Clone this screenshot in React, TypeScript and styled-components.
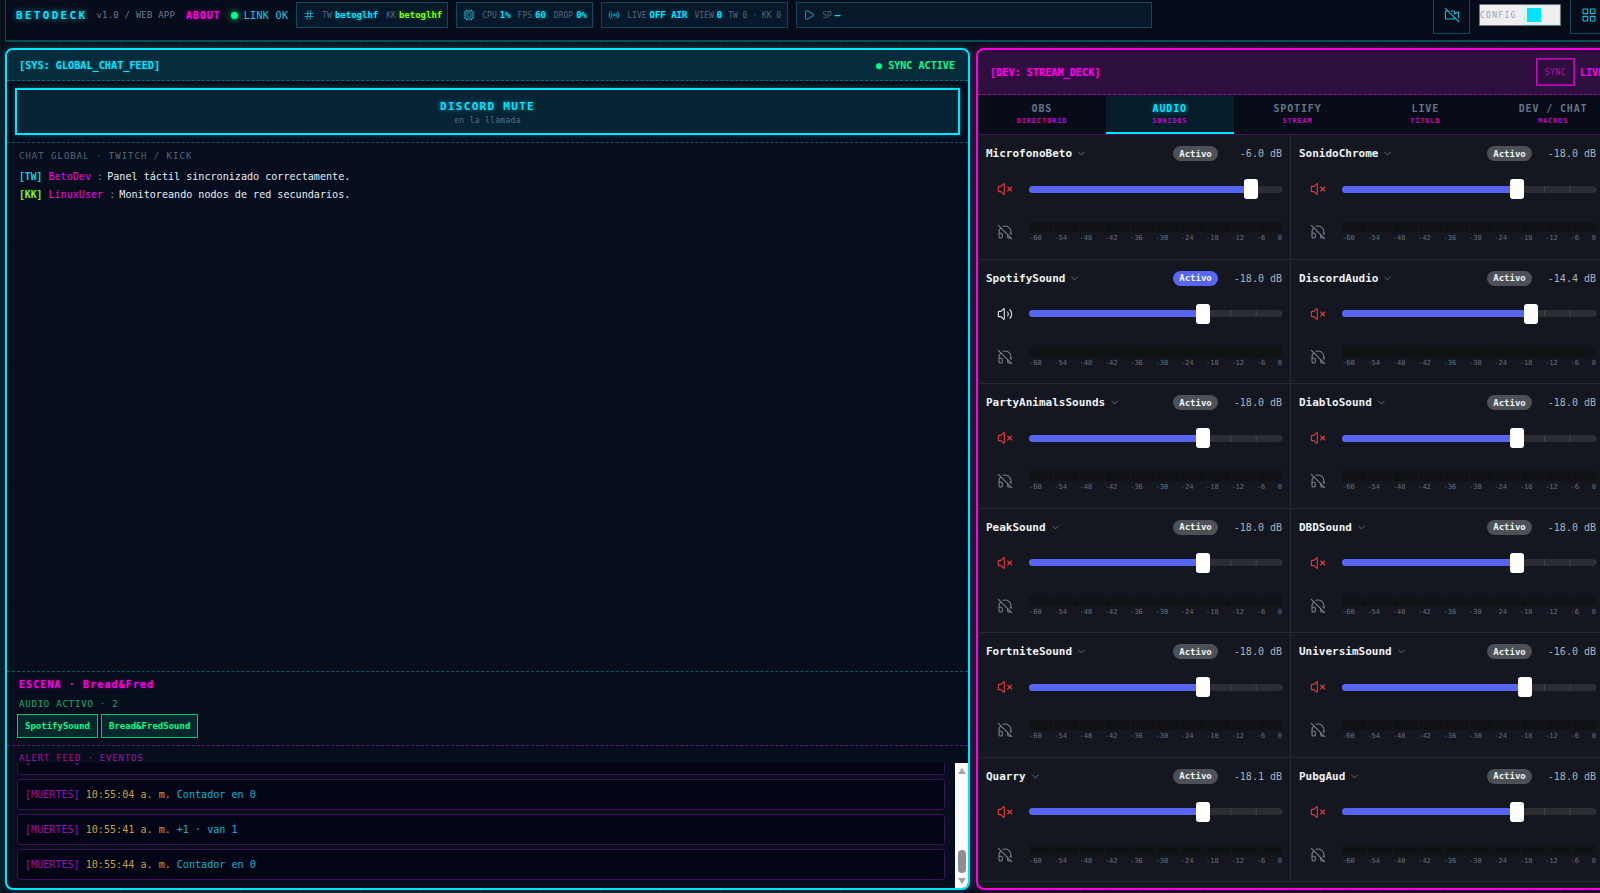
import React from "react";
import styled, { createGlobalStyle } from "styled-components";
import { Hash, Cpu, Radio, Play, VideoOff, LayoutGrid, VolumeX, Volume2, HeadphoneOff, ChevronDown } from "lucide-react";

const Global = createGlobalStyle`
  * { box-sizing: border-box; }
  html, body { margin: 0; padding: 0; height: 100%; overflow: hidden; background: #0a0e1a; }
  #root { height: 893px; }
`;

const CYAN = "#00e5ff";
const MAGENTA = "#ff00e6";
const GREEN = "#00ff88";

const Page = styled.div`
  width: 1625px;
  height: 893px;
  overflow: hidden;
  display: flex;
  flex-direction: column;
  font-family: "DejaVu Sans Mono", "Liberation Mono", monospace;
  background-color: #0a0e1a;
  background-image: linear-gradient(rgba(0, 229, 255, 0.035) 1px, transparent 1px),
    linear-gradient(90deg, rgba(0, 229, 255, 0.035) 1px, transparent 1px);
  background-size: 30px 30px;
  padding: 0 0 3px 5px;
`;

const Header = styled.header`
  flex: none;
  height: 42px;
  display: flex;
  align-items: flex-start;
  background: #070c1a;
  border-left: 1px solid #0b4a58;
  border-bottom: 2px solid #0b4a58;
  padding-left: 10px;
  padding-right: 18px;
`;

const HeaderRow = styled.div`
  flex: 1;
  height: 30px;
  display: flex;
  align-items: center;
`;

const Brand = styled.span`
  font-size: 11px;
  font-weight: 700;
  letter-spacing: 2.3px;
  color: ${CYAN};
  text-shadow: 0 0 6px rgba(0, 229, 255, 0.7);
  margin-right: 9px;
`;

const Version = styled.span`
  font-size: 9px;
  letter-spacing: 0.2px;
  color: #6b7a90;
  margin-right: 11px;
`;

const About = styled.span`
  font-size: 10px;
  font-weight: 700;
  letter-spacing: 0.9px;
  color: ${MAGENTA};
  text-shadow: 0 0 5px rgba(255, 0, 230, 0.5);
  margin-right: 10px;
`;

const Dot = styled.span`
  width: 7px;
  height: 7px;
  border-radius: 50%;
  background: ${GREEN};
  box-shadow: 0 0 6px ${GREEN};
  margin-right: 6px;
`;

const LinkOk = styled.span`
  font-size: 10px;
  letter-spacing: 0.35px;
  color: #00d5e8;
  margin-right: 8px;
`;

const StatBox = styled.div<{ $w: number }>`
  flex: none;
  width: ${(p) => p.$w}px;
  height: 26px;
  display: flex;
  align-items: center;
  gap: 3px;
  padding-left: 6px;
  margin-right: 8px;
  background: #07182a;
  border: 1px solid #0b4a58;
  color: #0e8ea0;
`;

const StatIcon = styled.span`
  display: flex;
  margin-right: 4px;
  color: #0fa3b8;
`;

const StatLabel = styled.span<{ $gap?: number }>`
  font-size: 8px;
  color: #56657a;
  margin-left: ${(p) => p.$gap ?? 0}px;
`;

const StatValue = styled.span<{ $lime?: boolean }>`
  font-size: 9px;
  font-weight: 700;
  color: ${(p) => (p.$lime ? "#7dff00" : CYAN)};
  text-shadow: 0 0 4px ${(p) => (p.$lime ? "rgba(125,255,0,.4)" : "rgba(0,229,255,.4)")};
`;

const Spacer = styled.div`
  flex: 1;
`;

const IconButton = styled.button`
  flex: none;
  width: 37px;
  height: 37px;
  display: flex;
  align-items: center;
  justify-content: center;
  padding: 0;
  background: #070c1a;
  border: 1px solid #0b4a58;
  color: #0fc0d6;
`;

const ConfigButton = styled.div`
  flex: none;
  width: 82px;
  height: 22px;
  margin: 0 9px;
  display: flex;
  align-items: center;
  justify-content: space-between;
  background: #efefef;
  border: 1px solid #767676;
  border-radius: 1px;
`;

const ConfigText = styled.span`
  font-size: 8px;
  letter-spacing: 1.3px;
  color: #93a4bb;
`;

const Swatch = styled.span`
  width: 36px;
  height: 20px;
  display: flex;
  align-items: center;
  padding-left: 2px;
  border: 1px solid #bdf3fa;
  &::before {
    content: "";
    width: 14px;
    height: 14px;
    background: ${CYAN};
  }
`;

const Shell = styled.main`
  flex: 1;
  min-height: 0;
  margin-top: 6px;
  display: grid;
  grid-template-columns: 965px 643px;
  column-gap: 6px;
`;

const LeftPanel = styled.section`
  display: flex;
  flex-direction: column;
  min-height: 0;
  overflow: hidden;
  background: #060d1c;
  border: 2px solid ${CYAN};
  border-radius: 8px;
  box-shadow: 0 0 8px rgba(0, 229, 255, 0.3);
`;

const LeftHead = styled.div`
  flex: none;
  height: 31px;
  display: flex;
  align-items: center;
  justify-content: space-between;
  padding: 0 13px 0 12px;
  background: #062c3c;
  border-bottom: 1px dashed #0b6a7c;
`;

const PanelTitle = styled.span<{ $c: string }>`
  font-size: 10.2px;
  font-weight: 700;
  color: ${(p) => p.$c};
  text-shadow: 0 0 3px ${(p) => p.$c}55;
`;

const Sync = styled.span`
  font-size: 10.1px;
  font-weight: 700;
  color: ${GREEN};
`;

const MuteWrap = styled.div`
  flex: none;
  height: 62px;
  padding: 7px 8px 7px 8px;
  border-bottom: 1px dashed #0b5a6a;
`;

const MuteBox = styled.div`
  height: 47px;
  display: flex;
  flex-direction: column;
  align-items: center;
  justify-content: center;
  gap: 3px;
  padding-top: 2px;
  background: #062433;
  border: 2px solid ${CYAN};
  box-shadow: 0 0 5px rgba(0, 229, 255, 0.35);
`;

const MuteTitle = styled.span`
  font-size: 11px;
  font-weight: 700;
  letter-spacing: 1.3px;
  color: ${CYAN};
  text-shadow: 0 0 5px rgba(0, 229, 255, 0.5);
`;

const MuteSub = styled.span`
  font-size: 8px;
  letter-spacing: 0.3px;
  color: #5d6e84;
`;

const Chat = styled.div`
  flex: 1;
  min-height: 0;
  padding: 8px 12px;
`;

const ChatTitle = styled.div`
  font-size: 9px;
  letter-spacing: 1px;
  color: #56657a;
  line-height: 11px;
  margin-bottom: 6px;
`;

const ChatLine = styled.div`
  font-size: 10.1px;
  line-height: 18px;
  color: #e6eef6;
`;

const Tag = styled.span<{ $c: string }>`
  font-size: 9.7px;
  font-weight: 700;
  color: ${(p) => p.$c};
`;

const User = styled.span`
  color: ${MAGENTA};
`;

const Muted = styled.span`
  margin-right: -2px;
  color: #7a8799;
`;

const Scene = styled.div`
  flex: none;
  height: 75px;
  padding: 6px 10px 0;
  border-top: 1px dashed #0b5a6a;
  border-bottom: 1px dashed #6a1280;
`;

const SceneTitle = styled.div`
  font-size: 10px;
  font-weight: 700;
  letter-spacing: 1.1px;
  line-height: 13px;
  padding-left: 2px;
  color: ${MAGENTA};
  text-shadow: 0 0 4px rgba(255, 0, 230, 0.4);
`;

const SceneSub = styled.div`
  font-size: 9px;
  letter-spacing: 0.8px;
  line-height: 11px;
  padding-left: 2px;
  margin-top: 8px;
  color: #00b86a;
`;

const Chips = styled.div`
  display: flex;
  gap: 3px;
  margin-top: 4px;
`;

const Chip = styled.span`
  height: 24px;
  display: flex;
  align-items: center;
  padding: 0 7px;
  font-size: 9px;
  font-weight: 700;
  color: ${GREEN};
  background: #06282c;
  border: 1px solid #00c86e;
`;

const AlertTitle = styled.div`
  flex: none;
  height: 17px;
  font-size: 9px;
  letter-spacing: 0.8px;
  line-height: 24px;
  padding-left: 12px;
  color: #a80ea0;
`;

const AlertBody = styled.div`
  flex: none;
  height: 125px;
  display: flex;
`;

const AlertList = styled.div`
  flex: 1;
  min-width: 0;
  overflow: hidden;
  display: flex;
  flex-direction: column;
  justify-content: flex-end;
  padding: 0 10px 4px 10px;
`;

const AlertItem = styled.div`
  flex: none;
  height: 31px;
  margin-bottom: 4px;
  display: flex;
  align-items: center;
  gap: 6px;
  padding: 0 7px;
  font-size: 10.1px;
  background: #030516;
  border: 1px solid #40105a;
  border-radius: 3px;
`;

const AlertTag = styled.span`
  color: #a00fa8;
`;

const AlertTime = styled.span`
  color: #c8a03c;
`;

const AlertMsg = styled.span`
  color: #00b8d0;
`;

const ScrollRail = styled.div`
  position: relative;
  flex: none;
  width: 13px;
  display: flex;
  flex-direction: column;
  align-items: center;
  justify-content: space-between;
  padding: 5px 0 4px;
  background: #fdfdfd;
`;

const ScrollArrow = styled.span<{ $down?: boolean }>`
  width: 0;
  height: 0;
  border-left: 4px solid transparent;
  border-right: 4px solid transparent;
  ${(p) => (p.$down ? "border-top: 6px solid #a3a3a3;" : "border-bottom: 6px solid #a3a3a3;")}
`;

const ScrollThumb = styled.span`
  position: absolute;
  left: 3px;
  bottom: 15px;
  width: 8px;
  height: 23px;
  border-radius: 4px;
  background: #8f8f8f;
`;

const RightPanel = styled.section`
  display: flex;
  flex-direction: column;
  min-height: 0;
  overflow: hidden;
  background: #14171f;
  border: 2px solid ${MAGENTA};
  border-radius: 8px;
  box-shadow: 0 0 8px rgba(255, 0, 230, 0.3);
`;

const RightHead = styled.div`
  flex: none;
  height: 45px;
  display: flex;
  align-items: center;
  padding: 0 0 0 12px;
  background: #2f0e40;
  border-bottom: 1px dashed #a010a0;
`;

const SyncButton = styled.span`
  flex: none;
  width: 39px;
  height: 28px;
  margin-left: auto;
  margin-right: 5px;
  display: flex;
  align-items: center;
  justify-content: center;
  font-size: 8px;
  letter-spacing: 0.5px;
  color: #b010b0;
  border: 1px solid #c010c0;
  box-shadow: inset 0 0 0 1px #8a0e8a;
`;

const LiveText = styled.span`
  width: 37px;
  font-size: 10px;
  font-weight: 700;
  color: ${MAGENTA};
`;

const Tabs = styled.nav`
  flex: none;
  height: 40px;
  display: grid;
  grid-template-columns: repeat(5, 127.8px);
  background: #070c18;
  border-bottom: 1px solid #4a0f60;
`;

const Tab = styled.div<{ $on?: boolean }>`
  display: flex;
  flex-direction: column;
  align-items: center;
  padding-top: 8px;
  gap: 2px;
  background: ${(p) => (p.$on ? "#051d2b" : "transparent")};
  border-bottom: 2px solid ${(p) => (p.$on ? CYAN : "transparent")};
`;

const TabLabel = styled.span<{ $on?: boolean }>`
  font-size: 10px;
  font-weight: 700;
  letter-spacing: 0.85px;
  line-height: 12px;
  color: ${(p) => (p.$on ? CYAN : "#64748b")};
  text-shadow: ${(p) => (p.$on ? "0 0 5px rgba(0,229,255,.6)" : "none")};
`;

const TabSub = styled.span`
  font-size: 7px;
  font-weight: 700;
  letter-spacing: 0.8px;
  line-height: 8px;
  color: #d000c8;
`;

const Mixer = styled.div`
  display: grid;
  grid-template-columns: 313px 313px;
  grid-auto-rows: 124.5px;
`;

const Cell = styled.article<{ $even: boolean }>`
  padding: 11px 8px 0;
  border-bottom: 1px solid #262932;
  border-right: ${(p) => (p.$even ? "none" : "1px solid #262932")};
`;

const NameRow = styled.div`
  height: 15px;
  display: flex;
  align-items: center;
`;

const Name = styled.span`
  font-size: 11px;
  font-weight: 700;
  color: #eef2f7;
`;

const Chevron = styled.span`
  display: flex;
  margin-left: 4px;
  color: #8a93a0;
`;

const Pill = styled.span<{ $on: boolean }>`
  width: 45px;
  height: 15px;
  margin-left: auto;
  display: flex;
  align-items: center;
  justify-content: center;
  border-radius: 8px;
  font-size: 9px;
  font-weight: 700;
  color: #f2f3f5;
  background: ${(p) => (p.$on ? "#5865f2" : "#4e5058")};
`;

const Db = styled.span`
  width: 64px;
  text-align: right;
  font-size: 10px;
  color: #aab2bd;
`;

const Row = styled.div<{ $top: number }>`
  display: flex;
  align-items: flex-start;
  margin-top: ${(p) => p.$top}px;
`;

const IconSlot = styled.div<{ $c: string }>`
  flex: none;
  width: 38px;
  height: 20px;
  margin-right: 5px;
  display: flex;
  align-items: center;
  justify-content: center;
  color: ${(p) => p.$c};
`;

const Slider = styled.div`
  position: relative;
  flex: 1;
  height: 20px;
  display: flex;
  align-items: center;
`;

const Track = styled.div`
  width: 100%;
  height: 7px;
  border-radius: 4px;
  overflow: hidden;
  background-color: #2b2d33;
  background-image: linear-gradient(to right, transparent calc(100% - 1px), #44464d 0);
  background-size: 10% 100%;
`;

const Fill = styled.div`
  height: 100%;
  background: #5865f2;
`;

const Thumb = styled.div`
  position: absolute;
  top: 0;
  width: 14px;
  height: 20px;
  margin-left: -7px;
  background: #fff;
  border-radius: 3px;
`;

const MeterWrap = styled.div`
  flex: 1;
`;

const Meter = styled.div`
  height: 10px;
  display: grid;
  grid-template-columns: repeat(10, 1fr);
  gap: 1px;
`;

const Segment = styled.span`
  background: #111216;
`;

const Scale = styled.div`
  display: flex;
  justify-content: space-between;
  margin-top: 2px;
  font-size: 7px;
  line-height: 9px;
  color: #6a707b;
`;

const channels: [string, number, boolean?][] = [
  ["MicrofonoBeto", -6],
  ["SonidoChrome", -18],
  ["SpotifySound", -18, true],
  ["DiscordAudio", -14.4],
  ["PartyAnimalsSounds", -18],
  ["DiabloSound", -18],
  ["PeakSound", -18],
  ["DBDSound", -18],
  ["FortniteSound", -18],
  ["UniversimSound", -16],
  ["Quarry", -18.1],
  ["PubgAud", -18],
];

const scale = ["-60", "-54", "-48", "-42", "-36", "-30", "-24", "-18", "-12", "-6", "0"];

const alerts: [string, string][] = [
  ["10:54:58 a. m.", "+1 · van 4"],
  ["10:55:04 a. m.", "Contador en 0"],
  ["10:55:41 a. m.", "+1 · van 1"],
  ["10:55:44 a. m.", "Contador en 0"],
];

const Channel = ({ name, db, on, even }: { name: string; db: number; on: boolean; even: boolean }) => {
  const pct = (db + 60) / 60;
  const thumbLeft = `calc(7px + ${pct} * (100% - 14px))`;
  return (
    <Cell $even={even}>
      <NameRow>
        <Name>{name}</Name>
        <Chevron>
          <ChevronDown size={11} strokeWidth={1.5} />
        </Chevron>
        <Pill $on={on}>Activo</Pill>
        <Db>{db.toFixed(1)} dB</Db>
      </NameRow>
      <Row $top={18}>
        <IconSlot $c={on ? "#dfe3e8" : "#e03a3e"}>
          {on ? <Volume2 size={16} strokeWidth={1.7} /> : <VolumeX size={16} strokeWidth={1.7} />}
        </IconSlot>
        <Slider>
          <Track>
            <Fill style={{ width: thumbLeft }} />
          </Track>
          <Thumb style={{ left: thumbLeft }} />
        </Slider>
      </Row>
      <Row $top={23}>
        <IconSlot $c="#7b828d">
          <HeadphoneOff size={16} strokeWidth={1.6} />
        </IconSlot>
        <MeterWrap>
          <Meter>
            {Array.from({ length: 10 }, (_, i) => (
              <Segment key={i} />
            ))}
          </Meter>
          <Scale>
            {scale.map((s) => (
              <span key={s}>{s}</span>
            ))}
          </Scale>
        </MeterWrap>
      </Row>
    </Cell>
  );
};

export default function App() {
  return (
    <Page>
      <Global />
      <Header>
        <HeaderRow>
          <Brand>BETODECK</Brand>
          <Version>v1.0 / WEB APP</Version>
          <About>ABOUT</About>
          <Dot />
          <LinkOk>LINK OK</LinkOk>
          <StatBox $w={152}>
            <StatIcon><Hash size={12} /></StatIcon>
            <StatLabel>TW</StatLabel>
            <StatValue>betoglhf</StatValue>
            <StatLabel $gap={5}>KK</StatLabel>
            <StatValue $lime>betoglhf</StatValue>
          </StatBox>
          <StatBox $w={137}>
            <StatIcon><Cpu size={12} /></StatIcon>
            <StatLabel>CPU</StatLabel>
            <StatValue>1%</StatValue>
            <StatLabel $gap={4}>FPS</StatLabel>
            <StatValue>60</StatValue>
            <StatLabel $gap={5}>DROP</StatLabel>
            <StatValue>0%</StatValue>
          </StatBox>
          <StatBox $w={187}>
            <StatIcon><Radio size={12} /></StatIcon>
            <StatLabel>LIVE</StatLabel>
            <StatValue>OFF AIR</StatValue>
            <StatLabel $gap={4}>VIEW</StatLabel>
            <StatValue>0</StatValue>
            <StatLabel $gap={3}>TW 0 · KK 0</StatLabel>
          </StatBox>
          <StatBox $w={356}>
            <StatIcon><Play size={12} /></StatIcon>
            <StatLabel>SP</StatLabel>
            <StatValue>—</StatValue>
          </StatBox>
          <Spacer />
          <IconButton><VideoOff size={16} strokeWidth={1.7} /></IconButton>
          <ConfigButton>
            <ConfigText>CONFIG</ConfigText>
            <Swatch />
          </ConfigButton>
          <IconButton><LayoutGrid size={16} strokeWidth={1.7} /></IconButton>
        </HeaderRow>
      </Header>
      <Shell>
        <LeftPanel>
          <LeftHead>
            <PanelTitle $c={CYAN}>[SYS: GLOBAL_CHAT_FEED]</PanelTitle>
            <Sync>● SYNC ACTIVE</Sync>
          </LeftHead>
          <MuteWrap>
            <MuteBox>
              <MuteTitle>DISCORD MUTE</MuteTitle>
              <MuteSub>en la llamada</MuteSub>
            </MuteBox>
          </MuteWrap>
          <Chat>
            <ChatTitle>CHAT GLOBAL · TWITCH / KICK</ChatTitle>
            <ChatLine>
              <Tag $c="#00d5e8">[TW]</Tag> <User>BetoDev</User> <Muted>:</Muted> Panel táctil sincronizado correctamente.
            </ChatLine>
            <ChatLine>
              <Tag $c="#7dff00">[KK]</Tag> <User>LinuxUser</User> <Muted>:</Muted> Monitoreando nodos de red secundarios.
            </ChatLine>
          </Chat>
          <Scene>
            <SceneTitle>ESCENA · Bread&amp;Fred</SceneTitle>
            <SceneSub>AUDIO ACTIVO · 2</SceneSub>
            <Chips>
              <Chip>SpotifySound</Chip>
              <Chip>Bread&amp;FredSound</Chip>
            </Chips>
          </Scene>
          <AlertTitle>ALERT FEED · EVENTOS</AlertTitle>
          <AlertBody>
            <AlertList>
              {alerts.map(([t, m]) => (
                <AlertItem key={t}>
                  <AlertTag>[MUERTES]</AlertTag>
                  <AlertTime>{t}</AlertTime>
                  <AlertMsg>{m}</AlertMsg>
                </AlertItem>
              ))}
            </AlertList>
            <ScrollRail>
              <ScrollArrow />
              <ScrollThumb />
              <ScrollArrow $down />
            </ScrollRail>
          </AlertBody>
        </LeftPanel>
        <RightPanel>
          <RightHead>
            <PanelTitle $c={MAGENTA}>[DEV: STREAM_DECK]</PanelTitle>
            <SyncButton>SYNC</SyncButton>
            <LiveText>LIVE</LiveText>
          </RightHead>
          <Tabs>
            <Tab><TabLabel>OBS</TabLabel><TabSub>DIRECTORIO</TabSub></Tab>
            <Tab $on><TabLabel $on>AUDIO</TabLabel><TabSub>SONIDOS</TabSub></Tab>
            <Tab><TabLabel>SPOTIFY</TabLabel><TabSub>STREAM</TabSub></Tab>
            <Tab><TabLabel>LIVE</TabLabel><TabSub>TÍTULO</TabSub></Tab>
            <Tab><TabLabel>DEV / CHAT</TabLabel><TabSub>MACROS</TabSub></Tab>
          </Tabs>
          <Mixer>
            {channels.map(([n, d, on], i) => (
              <Channel key={n} name={n} db={d} on={!!on} even={i % 2 === 1} />
            ))}
          </Mixer>
        </RightPanel>
      </Shell>
    </Page>
  );
}
